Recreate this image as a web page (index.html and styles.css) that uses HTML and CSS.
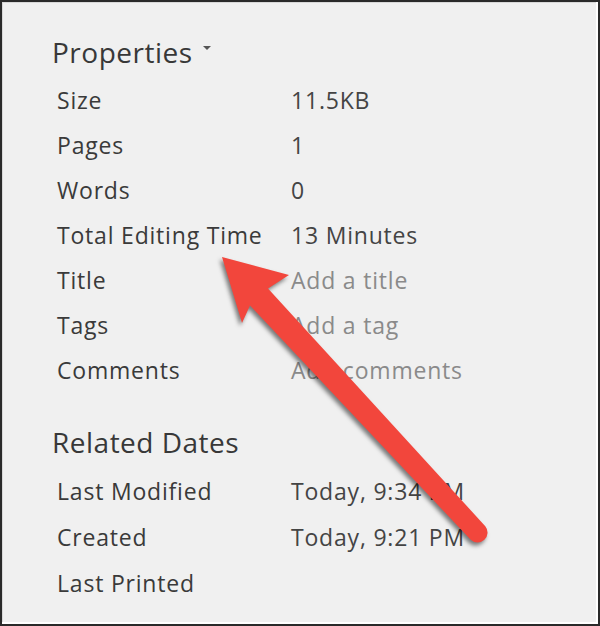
FILE: index.html
```html
<!DOCTYPE html>
<html lang="en">
<head>
<meta charset="utf-8">
<title>Properties</title>
<link rel="stylesheet" href="styles.css">
</head>
<body>
<div class="frame">
  <section class="panel">
    <h2 class="heading">Properties <span class="caret"></span></h2>
    <dl class="props">
      <dt>Size</dt><dd>11.5KB</dd>
      <dt>Pages</dt><dd>1</dd>
      <dt>Words</dt><dd>0</dd>
      <dt>Total Editing Time</dt><dd>13 Minutes</dd>
      <dt>Title</dt><dd class="ph">Add a title</dd>
      <dt>Tags</dt><dd class="ph">Add a tag</dd>
      <dt>Comments</dt><dd class="ph">Add comments</dd>
    </dl>
    <h2 class="heading dates-heading">Related Dates</h2>
    <dl class="props dates">
      <dt>Last Modified</dt><dd>Today, 9:34 PM</dd>
      <dt>Created</dt><dd>Today, 9:21 PM</dd>
      <dt>Last Printed</dt><dd></dd>
    </dl>
  </section>
  <svg class="arrow" width="600" height="626" viewBox="0 0 600 626" aria-hidden="true">
    <path d="M222,257 L289,275 L268,288.5 L485.3,526.2 A10,10 0 0 1 470.7,539.8 L250,305.5 L242,323 Z" fill="#f2463c"/>
  </svg>
</div>
</body>
</html>
```
FILE: styles.css
```css
* { box-sizing: border-box; }
html, body { margin: 0; padding: 0; }
body {
  width: 600px;
  height: 626px;
  background: #ffffff;
  font-family: "Open Sans", "Noto Sans", sans-serif;
}
.frame {
  position: relative;
  width: 600px;
  height: 626px;
  background: #f0f0f0;
  border: 2px solid #2a2a2a;
  box-shadow: inset -2px -2px 0 #ffffff, inset 1px 1px 0 #d8d8d8;
  overflow: hidden;
}
.panel {
  padding: 30px 0 0 50px;
}
.heading {
  margin: 0;
  font-weight: 400;
  font-size: 28px;
  letter-spacing: 0.5px;
  line-height: 40px;
  color: #383838;
  display: flex;
  align-items: center;
  gap: 10px;
}
.caret {
  width: 0;
  height: 0;
  border-left: 4px solid transparent;
  border-right: 4px solid transparent;
  border-top: 4px solid #555;
  margin-top: -8px;
}
.props {
  margin: 6px 0 0 5px;
  display: grid;
  grid-template-columns: 234px 1fr;
  grid-auto-rows: 45px;
  font-size: 23px;
  letter-spacing: 0.8px;
  line-height: 45px;
  color: #3a3a3a;
}
.props dt, .props dd { margin: 0; white-space: nowrap; }
.props dd { color: #444; }
.props dd.ph { color: #8a8a8a; }
.dates-heading { margin-top: 29px; }
.dates { grid-auto-rows: 46px; line-height: 46px; margin-top: 6px; }
.arrow {
  position: absolute;
  left: -2px;
  top: -2px;
  filter: drop-shadow(-2px 3px 2px rgba(0,0,0,0.5));
}
```
